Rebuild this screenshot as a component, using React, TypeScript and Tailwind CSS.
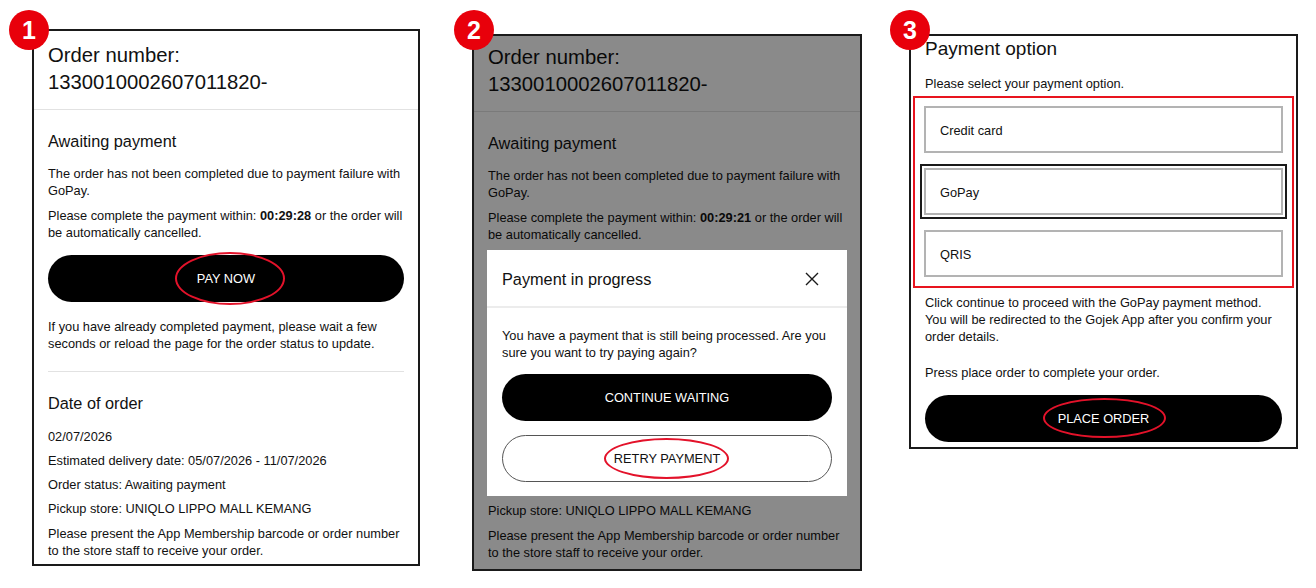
import type { ReactNode } from "react";

// Numbered red marker that sits on a panel's top-left corner
const Badge = ({ n, className }: { n: number; className: string }) => (
	<span
		className={`absolute z-20 flex h-[40px] w-[40px] items-center justify-center rounded-full bg-[#e8000b] text-[25px] font-bold leading-none text-white ${className}`}
	>
		{n}
	</span>
);

// Red hand-drawn style ellipse around a button label
const Ring = ({ className }: { className: string }) => (
	<span className={`pointer-events-none absolute rounded-[50%] border-2 border-[#e3122a] ${className}`} />
);

const Pill = ({
	children,
	className = "",
	outline = false,
}: {
	children: ReactNode;
	className?: string;
	outline?: boolean;
}) => (
	<button
		type="button"
		className={`relative flex h-[47px] w-full items-center justify-center rounded-full text-[12.8px] ${
			outline ? "border border-[#555] bg-white text-[#111]" : "bg-black text-white"
		} ${className}`}
	>
		{children}
	</button>
);

const OrderDetails = ({ timer, headerPad, ring }: { timer: string; headerPad: string; ring: boolean }) => (
	<>
		<div className={`border-b border-[#e2e2e2] px-[14px] pb-[13px] ${headerPad}`}>
			<p className="text-[20.3px] leading-[27px]">
				Order number:
				<br />
				1330010002607011820-
			</p>
		</div>
		<div className="px-[14px]">
			<h2 className="mt-[20px] text-[16.3px] leading-[22px]">Awaiting payment</h2>
			<p className="mt-[13px]">The order has not been completed due to payment failure with GoPay.</p>
			<p className="mt-[8px]">
				Please complete the payment within: <b>{timer}</b> or the order will be automatically cancelled.
			</p>
			<Pill className="mt-[14px]">
				PAY NOW
				{ring && <Ring className="left-[127px] top-[-3px] h-[53px] w-[110px]" />}
			</Pill>
			<p className="mt-[16px]">
				If you have already completed payment, please wait a few seconds or reload the page for the order
				status to update.
			</p>
			<div className="mt-[19px] border-t border-[#e2e2e2]" />
			<h2 className="mt-[20px] text-[16.3px] leading-[22px]">Date of order</h2>
			<p className="mt-[14px]">02/07/2026</p>
			<p className="mt-[7px]">Estimated delivery date: 05/07/2026 - 11/07/2026</p>
			<p className="mt-[7px]">Order status: Awaiting payment</p>
			<p className="mt-[7px]">Pickup store: UNIQLO LIPPO MALL KEMANG</p>
			<p className="mt-[8px]">
				Please present the App Membership barcode or order number to the store staff to receive your order.
			</p>
		</div>
	</>
);

const PaymentOption = ({ label, selected = false }: { label: string; selected?: boolean }) => (
	<div
		className={`flex h-[47px] items-center border-2 border-[#b3b3b3] bg-white pl-[14px] pt-[2px] ${
			selected ? "outline-2 outline-offset-2 outline-[#1a1a1a]" : ""
		}`}
	>
		{label}
	</div>
);

export default function App() {
	return (
		<div className="flex h-[588px] w-[1316px] items-start overflow-hidden bg-white font-['Liberation_Sans',Arial,sans-serif] text-[12.8px] leading-[17px] text-[#111]">
			{/* 1: order awaiting payment */}
			<section className="relative ml-[32px] mt-[29px] h-[537px] w-[388px] shrink-0 border-2 border-[#1a1a1a] bg-white">
				<Badge n={1} className="left-[-25px] top-[-21px]" />
				<OrderDetails timer="00:29:28" headerPad="pt-[11px]" ring />
			</section>

			{/* 2: retry dialog over the dimmed order page */}
			<section className="relative ml-[52px] mt-[34px] h-[537px] w-[390px] shrink-0 border-2 border-[#1a1a1a] bg-white">
				<Badge n={2} className="left-[-20px] top-[-26px]" />
				<OrderDetails timer="00:29:21" headerPad="pt-[8px]" ring={false} />
				<div className="absolute inset-0 bg-[rgba(0,0,0,0.46)]" />
				<div className="absolute left-[13px] top-[214px] z-10 w-[360px] bg-white">
					<div className="flex h-[58px] items-center justify-between border-b-2 border-[#ececec] pl-[15px] pr-[28px] pt-[2px]">
						<h3 className="text-[16.3px] leading-[22px]">Payment in progress</h3>
						<svg width="14" height="14" viewBox="0 0 14 14" fill="none" stroke="#1a1a1a" strokeWidth="1.4">
							<path d="M1 1 13 13M13 1 1 13" />
						</svg>
					</div>
					<div className="px-[15px] pb-[14px] pt-[19px]">
						<p>You have a payment that is still being processed. Are you sure you want to try paying again?</p>
						<Pill className="mt-[13px]">CONTINUE WAITING</Pill>
						<Pill outline className="mt-[14px]">
							RETRY PAYMENT
							<Ring className="left-[101px] top-[2px] h-[41px] w-[125px]" />
						</Pill>
					</div>
				</div>
			</section>

			{/* 3: payment method selection */}
			<section className="relative ml-[47px] mt-[34px] h-[415px] w-[389px] shrink-0 border-2 border-[#1a1a1a] bg-white">
				<Badge n={3} className="left-[-21px] top-[-26px]" />
				<h2 className="px-[14px] pt-[1px] text-[19px] leading-[24px]">Payment option</h2>
				<p className="mt-[14px] px-[14px]">Please select your payment option.</p>
				<div className="mx-[2px] mt-[4px] flex flex-col gap-[15px] border-2 border-[#e8141e] px-[9px] pb-[9px] pt-[8px]">
					<PaymentOption label="Credit card" />
					<PaymentOption label="GoPay" selected />
					<PaymentOption label="QRIS" />
				</div>
				<div className="px-[14px]">
					<p className="mt-[6px]">
						Click continue to proceed with the GoPay payment method.
						<br />
						You will be redirected to the Gojek App after you confirm your order details.
					</p>
					<p className="mt-[19px]">Press place order to complete your order.</p>
					<Pill className="mt-[14px] h-[46px]">
						PLACE ORDER
						<Ring className="left-[118px] top-[3px] h-[40px] w-[123px]" />
					</Pill>
				</div>
			</section>
		</div>
	);
}
